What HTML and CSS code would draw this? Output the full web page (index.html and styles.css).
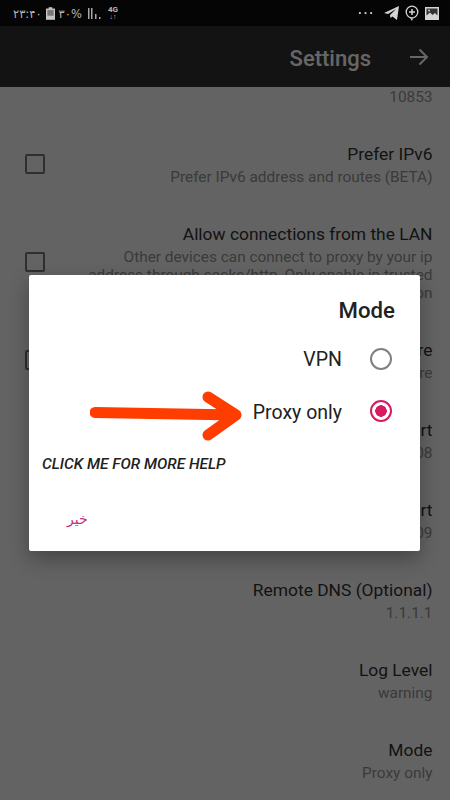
FILE: index.html
```html
<!DOCTYPE html>
<html lang="en">
<head>
<meta charset="utf-8">
<title>Settings</title>
<link rel="stylesheet" href="styles.css">
</head>
<body>
<div class="phone">
  <div class="status">
    <div class="status-left">
      <span class="clock">۲۳:۴۰</span>
      <svg class="ico-batt" width="9" height="13" viewBox="0 0 10 14"><rect x="3" y="0" width="4" height="2" fill="#c4c4c4"/><rect x="0" y="1.500" width="10" height="12.500" fill="#c4c4c4"/><rect x="1.500" y="3" width="7" height="6.500" fill="#777"/></svg>
      <span class="pct">۳۰%</span>
      <svg class="ico-signal" width="13" height="13" viewBox="0 0 13 13"><rect x="0" y="1" width="1.500" height="11" fill="#a8a8a8"/><rect x="3" y="1" width="1.500" height="11" fill="#a8a8a8"/><rect x="7" y="7" width="1.500" height="5" fill="#a8a8a8"/><rect x="11" y="10" width="1.500" height="2" fill="#a8a8a8"/></svg>
      <span class="net">4G<i>↓↑</i></span>
    </div>
    <div class="status-right">
      <svg class="ico-dots" width="15" height="4" viewBox="0 0 16 4"><circle cx="2" cy="2" r="1.200" fill="#ccc"/><circle cx="8" cy="2" r="1.200" fill="#ccc"/><circle cx="14" cy="2" r="1.200" fill="#ccc"/></svg>
      <svg width="15" height="14" viewBox="0 0 15 14"><path d="M0 7 L15 0 L13 14 L8.500 10.500 L6.500 12 L6 9 L12 3 L4 8 Z" fill="#d4d4d4"/></svg>
      <svg width="14" height="16" viewBox="0 0 14 16"><circle cx="7" cy="7" r="5.800" fill="none" stroke="#d4d4d4" stroke-width="1.300"/><path d="M7 4v6M4 7h6" stroke="#d4d4d4" stroke-width="1.500"/><path d="M5 13l2 3 1-2.500" fill="#d4d4d4"/></svg>
      <svg width="14" height="13" viewBox="0 0 14 13"><rect width="14" height="13" fill="#d4d4d4"/><path d="M1.500 8.500 L5 5.500 L7.500 8 L10 6 L12.500 8.500 V1.500 H1.500 Z" fill="#333"/><circle cx="4" cy="3.500" r="1" fill="#d4d4d4"/></svg>
    </div>
  </div>
  <header class="appbar">
    <h1 class="appbar-title">Settings</h1>
    <svg class="appbar-back" width="20" height="18" viewBox="0 0 20 18"><path d="M1 9H18M10.500 1.500L18 9L10.500 16.500" fill="none" stroke="#fff" stroke-width="2"/></svg>
  </header>
  <main class="list">
    <div class="row row-cut"><p class="sub">10853</p></div>
    <div class="row row-check"><span class="check"></span><div class="texts"><p class="title">Prefer IPv6</p><p class="sub">Prefer IPv6 address and routes (BETA)</p></div></div>
    <div class="row row-check row-tall"><span class="check"></span><div class="texts"><p class="title">Allow connections from the LAN</p><p class="sub">Other devices can connect to proxy by your ip address through socks/http, Only enable in trusted network to avoid unauthorized connection</p></div></div>
    <div class="row row-check"><span class="check"></span><div class="texts"><p class="title">Enable secure</p><p class="sub">Make the connection secure</p></div></div>
    <div class="row"><div class="texts"><p class="title">SOCKS5 Port</p><p class="sub">10808</p></div></div>
    <div class="row"><div class="texts"><p class="title">HTTP Port</p><p class="sub">10809</p></div></div>
    <div class="row"><div class="texts"><p class="title">Remote DNS (Optional)</p><p class="sub">1.1.1.1</p></div></div>
    <div class="row"><div class="texts"><p class="title">Log Level</p><p class="sub">warning</p></div></div>
    <div class="row"><div class="texts"><p class="title">Mode</p><p class="sub">Proxy only</p></div></div>
  </main>
  <div class="scrim"></div>
  <section class="dialog">
    <h2 class="dialog-title">Mode</h2>
    <div class="option"><span>VPN</span><span class="radio"></span></div>
    <div class="option"><span class="option-low">Proxy only</span><span class="radio radio-on"></span></div>
    <p class="help">CLICK ME FOR MORE HELP</p>
    <p class="cancel">خیر</p>
    <svg class="arrow" width="152" height="50" viewBox="0 0 152 50"><path d="M5 21.500L146 24M118 6L146 24L118 44" fill="none" stroke="#ff3d00" stroke-width="11" stroke-linecap="round" stroke-linejoin="round"/></svg>
  </section>
</div>
</body>
</html>
```
FILE: styles.css
```css
* { box-sizing: border-box; }
html, body { margin: 0; padding: 0; }
body { width: 450px; height: 800px; overflow: hidden; font-family: Roboto, "DejaVu Sans", sans-serif; }
p, h1, h2 { margin: 0; font-weight: 400; }
.phone { position: relative; width: 450px; height: 800px; overflow: hidden; background: #f8f8f8; display: flex; flex-direction: column; }
.status { position: relative; z-index: 3; height: 26px; flex: none; background: #050505; display: flex; justify-content: space-between; align-items: center; padding: 0 11px 0 13px; color: #b8b8b8; }
.status-left, .status-right { display: flex; align-items: center; }
.status-left { gap: 4px; }
.status-right { gap: 6px; }
.ico-dots { margin-right: 5px; }
.clock, .pct { font: 11.5px/14px "DejaVu Sans", sans-serif; padding-top: 2px; }
.ico-signal { margin-left: 2px; }
.net { font: 700 8px/8px Roboto, sans-serif; display: flex; flex-direction: column; align-items: center; margin-left: 3px; }
.net i { font-style: normal; font-size: 7px; line-height: 7px; }
.appbar { flex: none; height: 61px; background: #303030; display: flex; justify-content: flex-end; align-items: center; gap: 38px; padding: 0 21px 0 0; color: #fff; }
.appbar-title { font-size: 22px; font-weight: 500; line-height: 57px; padding-top: 4px; }
.list { flex: 1; padding: 0 17.500px 0 0; }
.row { height: 80px; display: flex; justify-content: flex-end; align-items: center; padding-left: 25px; }
.row-cut { height: 37px; align-items: flex-start; padding-top: 1px; }
.row-cut .sub { margin-top: 0; }
.row-check { justify-content: space-between; }
.row-tall { height: 116px; padding-top: 19px; align-items: flex-start; }
.row-tall .check { margin-top: 29px; }
.texts { text-align: right; }
.check { flex: none; width: 20px; height: 20px; border: 2px solid #777; border-radius: 2px; }
.title { font-size: 17.400px; line-height: 22px; color: #303030; }
.sub { font-size: 15.400px; line-height: 18px; margin-top: 3px; color: #929292; }
.row-tall .sub { width: 350px; margin-left: auto; }
.scrim { position: absolute; inset: 0; z-index: 1; background: rgba(0, 0, 0, .6); }
.dialog { position: absolute; z-index: 2; left: 29px; top: 275px; width: 391px; height: 276px; background: #fff; border-radius: 2px; box-shadow: 0 8px 20px rgba(0, 0, 0, .3); padding: 22px 25px 0 13px; color: #212121; }
.dialog-title { font-size: 22.200px; line-height: 26px; font-weight: 500; text-align: right; }
.option { height: 52px; display: flex; justify-content: flex-end; align-items: center; gap: 28px; font-size: 19.500px; }
.dialog-title + .option { margin-top: 10px; }
.option-low { padding-top: 2px; }
.radio { width: 22px; height: 22px; border: 2px solid #808080; border-radius: 50%; margin-right: 3px; }
.radio-on { border-color: #d81b60; background: radial-gradient(circle, #d81b60 0 5.500px, transparent 6px); }
.help { margin-top: 18px; font-size: 15.400px; line-height: 18px; font-style: italic; font-weight: 500; }
.cancel { margin: 38px 0 0 25px; font: 14px "DejaVu Sans", sans-serif; color: #c2307c; }
.arrow { position: absolute; left: 61px; top: 116px; }
```
